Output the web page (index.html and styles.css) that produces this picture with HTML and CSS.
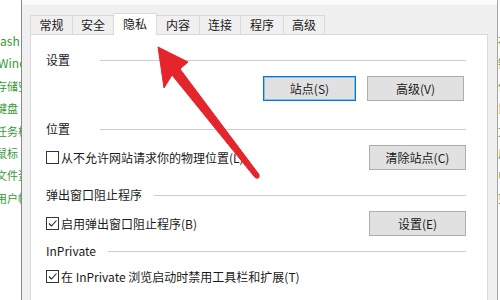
FILE: index.html
```html
<!DOCTYPE html>
<html lang="zh-CN">
<head>
    <meta charset="UTF-8">
    <title>Internet 选项 - 隐私</title>
    <link rel="stylesheet" href="styles.css">
</head>
<body>
    <div class="screen">
        <div class="side-list">
            <div class="side-item side-item-flash">Flash</div>
            <div class="side-item side-item-win">Windows</div>
            <div class="side-item">存储空间</div>
            <div class="side-item">键盘</div>
            <div class="side-item">任务栏</div>
            <div class="side-item">鼠标</div>
            <div class="side-item">文件资源管理器</div>
            <div class="side-item">用户帐户</div>
        </div>

        <div class="dialog">
            <div class="tabs">
                <div class="tab" style="width: 42px;">常规</div>
                <div class="tab" style="width: 41px;">安全</div>
                <div class="tab tab-active" style="width: 44px;">隐私</div>
                <div class="tab" style="width: 42px;">内容</div>
                <div class="tab" style="width: 41px;">连接</div>
                <div class="tab" style="width: 43px;">程序</div>
                <div class="tab" style="width: 42px;">高级</div>
            </div>

            <div class="panel">
                <section class="group group-settings">
                    <div class="group-head">
                        <span class="group-title">设置</span>
                        <span class="group-rule"></span>
                    </div>
                    <div class="row row-buttons">
                        <button class="btn btn-focus" style="width: 93px;">站点(S)</button>
                        <button class="btn" style="width: 97px;">高级(V)</button>
                    </div>
                </section>

                <section class="group group-location">
                    <div class="group-head">
                        <span class="group-title">位置</span>
                        <span class="group-rule"></span>
                    </div>
                    <div class="row">
                        <label class="check">
                            <span class="check-box"></span>
                            从不允许网站请求你的物理位置(L)
                        </label>
                        <button class="btn" style="width: 97px;">清除站点(C)</button>
                    </div>
                </section>

                <section class="group group-popup">
                    <div class="group-head">
                        <span class="group-title">弹出窗口阻止程序</span>
                        <span class="group-rule"></span>
                    </div>
                    <div class="row">
                        <label class="check">
                            <span class="check-box">
                                <svg viewBox="0 0 11 11" width="11" height="11"><polyline points="2,5.5 4.5,8 9.5,2.5" fill="none" stroke="#222" stroke-width="1.1"/></svg>
                            </span>
                            启用弹出窗口阻止程序(B)
                        </label>
                        <button class="btn" style="width: 97px;">设置(E)</button>
                    </div>
                </section>

                <section class="group group-inprivate">
                    <div class="group-head">
                        <span class="group-title">InPrivate</span>
                        <span class="group-rule"></span>
                    </div>
                    <div class="row row-short">
                        <label class="check">
                            <span class="check-box">
                                <svg viewBox="0 0 11 11" width="11" height="11"><polyline points="2,5.5 4.5,8 9.5,2.5" fill="none" stroke="#222" stroke-width="1.1"/></svg>
                            </span>
                            在 InPrivate 浏览启动时禁用工具栏和扩展(T)
                        </label>
                    </div>
                </section>
            </div>
        </div>

        <div class="side-edge">
            <div class="side-item">存储</div>
            <div class="side-item">键盘</div>
            <div class="side-item">任务</div>
            <div class="side-item">鼠标</div>
            <div class="side-item">文件</div>
            <div class="side-item">用户</div>
            <div class="side-item">电源</div>
            <div class="side-item">更新</div>
        </div>
    </div>

    <!-- annotation arrow pointing at the 隐私 tab -->
    <svg class="arrow" viewBox="0 0 500 300" width="500" height="300">
        <path d="M158,47 L188,62 L180,69 L259,174.5 Q260,180 255,177.5 L172,75 L164,88 Z"
              fill="#e4252b" stroke="#e4252b" stroke-width="1" stroke-linejoin="round"/>
    </svg>
</body>
</html>
```

FILE: styles.css
```css
* {
    margin: 0;
    padding: 0;
    box-sizing: border-box;
}

body {
    width: 500px;
    height: 300px;
    overflow: hidden;
    position: relative;
    font-family: "Noto Sans CJK SC", "Noto Sans", sans-serif;
    font-size: 12px;
    color: #1a1a1a;
    background: #fff;
}

.screen {
    display: flex;
    height: 300px;
}

.side-list {
    width: 22px;
    height: 300px;
    background: #fff;
    border-right: 1px solid #8a8a8a;
    overflow: hidden;
    padding-top: 30px;
}

.side-item {
    white-space: nowrap;
    font-size: 11px;
    line-height: 22.4px;
    color: #35993a;
    margin-left: -4px;
}

.side-item-flash {
    font-size: 12px;
    margin-left: -10px;
}

.side-item-win {
    font-size: 12px;
    margin-left: -2px;
}

.side-edge {
    width: 3px;
    height: 300px;
    background: #fff;
    border-left: 1px solid #a3a3a3;
    overflow: hidden;
    padding-top: 30px;
}

.side-edge .side-item {
    margin-left: 0;
}

.dialog {
    flex: 1;
    height: 300px;
    background: #f0f0f0;
    border-top: 5px solid #fbfbfb;
    padding: 8px 9px 0 8px;
}

.tabs {
    display: flex;
    align-items: flex-end;
    height: 22px;
    margin-bottom: -1px;
}

.tab {
    height: 19px;
    margin-bottom: 1px;
    border-top: 1px solid #d9d9d9;
    border-left: 1px solid #d9d9d9;
    background: #f0f0f0;
    text-align: center;
    line-height: 17px;
    white-space: nowrap;
}

.tab:last-child {
    border-right: 1px solid #d9d9d9;
}

.tab-active {
    position: relative;
    z-index: 1;
    height: 22px;
    margin-bottom: 0;
    background: #fff;
    border-right: 1px solid #d9d9d9;
    line-height: 19px;
}

.tab-active + .tab {
    border-left: none;
}

.panel {
    height: 280px;
    background: #fff;
    border: 1px solid #d9d9d9;
    padding: 0 21px 0 15px;
    overflow: hidden;
}

.group-settings { margin-top: 17px; }
.group-location { margin-top: 20px; }
.group-popup { margin-top: 17px; }
.group-inprivate { margin-top: 7px; }

.group-head {
    display: flex;
    align-items: center;
    height: 16px;
    line-height: 16px;
}

.group-title {
    min-width: 42px;
    white-space: nowrap;
}

.group-rule {
    flex: 1;
    height: 1px;
    margin-left: 12px;
    background: #cdcdcd;
}

.row {
    display: flex;
    align-items: center;
    justify-content: space-between;
    height: 25px;
    margin-top: 8px;
}

.row-buttons {
    justify-content: flex-end;
    gap: 11px;
    padding-right: 2px;
}

.row-short {
    height: 18px;
}

.btn {
    height: 25px;
    background: #e1e1e1;
    border: 1px solid #adadad;
    font-family: inherit;
    font-size: 12px;
    color: #1a1a1a;
    line-height: 23px;
}

.btn-focus {
    border-color: #0078d7;
    box-shadow: inset 0 0 0 1px rgba(0, 120, 215, 0.35);
}

.check {
    display: flex;
    align-items: center;
    white-space: nowrap;
}

.check-box {
    width: 13px;
    height: 13px;
    border: 1px solid #333;
    background: #fff;
    margin-right: 2px;
    display: flex;
    align-items: center;
    justify-content: center;
}

.arrow {
    position: absolute;
    left: 0;
    top: 0;
    pointer-events: none;
}
```
